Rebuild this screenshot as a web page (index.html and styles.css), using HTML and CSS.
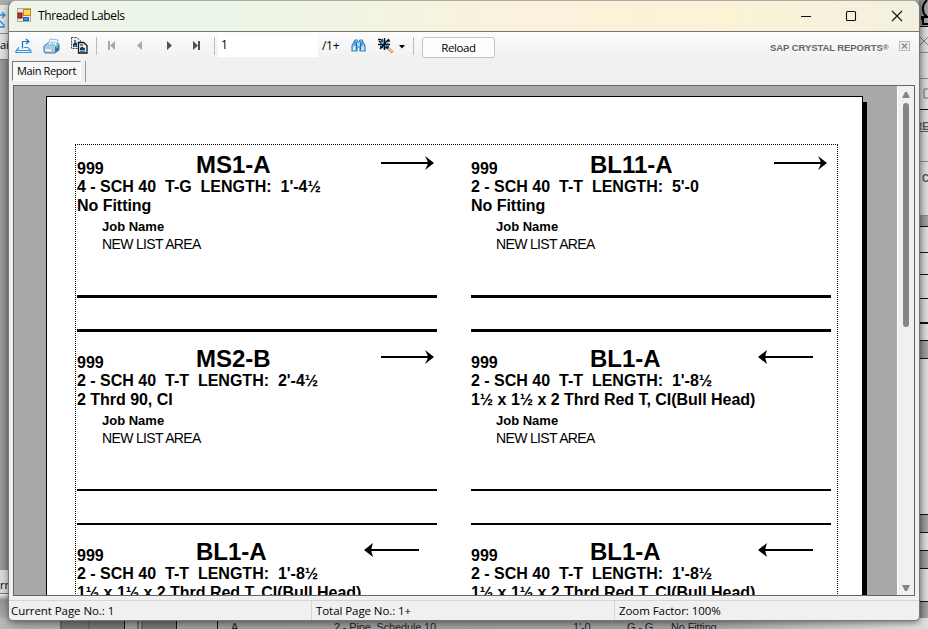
FILE: index.html
```html
<!DOCTYPE html>
<html lang="en">
<head>
<meta charset="utf-8">
<title>Threaded Labels</title>
<link rel="stylesheet" href="styles.css">
</head>
<body>
<div class="desktop">
  <div class="behind-left">
    <div class="bl-top"><svg width="9" height="16" viewBox="0 0 9 16"><path d="M0 3h4M2 0l3 3-3 3M0 9l4 4v2H0" fill="none" stroke="#268bd8" stroke-width="1.3"/></svg></div>
    <div class="bl-tab">ai</div>
    <div class="bl-canvas"></div>
    <div class="bl-status">rr</div>
  </div>
  <div class="behind-right">
    <div class="s dark" style="height:27px"><svg width="9" height="27" viewBox="0 0 9 27"><path d="M8 0q-5 5-4 10 1 6 4 6M2 17h7M4 17v7h5M3 17v3" fill="none" stroke="#000" stroke-width="2"/></svg></div>
    <div class="s soft" style="height:26px"><svg width="9" height="26" viewBox="0 0 9 26"><path d="M1 10l8 8M9 10l-8 8" fill="none" stroke="#777"/></svg></div>
    <div class="s soft" style="height:26px"></div>
    <div class="s" style="height:31px"><svg width="9" height="30" viewBox="0 0 9 30"><path d="M9 10H5v9h4" fill="none" stroke="#666"/></svg></div>
    <div class="s soft" style="height:52px"><span class="re">RE</span></div>
    <div class="s soft" style="height:54px"><span class="ce">C</span></div>
    <div class="s dark" style="height:11px"></div>
    <div class="s" style="height:26px"></div>
    <div class="s" style="height:22px"></div>
    <div class="s" style="height:24px"></div>
    <div class="s thick" style="height:25px"></div>
    <div class="s" style="height:17px"></div>
    <div class="s dark" style="height:18px"></div>
    <div class="s" style="height:156px"></div>
    <div class="s dark" style="height:18px"></div>
    <div class="s" style="height:18px"></div>
    <div class="s dark" style="height:18px"></div>
    <div class="s" style="height:33px"></div>
    <div class="s dark" style="height:18px"></div>
  </div>
  <div class="behind-bottom">
    <div class="cells"><i class="c0"></i><i class="c1"></i><i class="c2"></i><i class="c3"></i><i class="c4"></i><i class="c5"></i><i class="c6"></i></div>
    <span class="b b1">A</span><span class="b b2">2 - Pipe, Schedule 10</span><span class="b b3">1'-0</span><span class="b b4">G - G</span><span class="b b5">No Fitting</span>
  </div>

  <div class="window">
    <div class="titlebar">
      <svg class="app-icon" width="15" height="15" viewBox="0 0 15 15">
        <rect x=".5" y=".5" width="13" height="13" fill="#e8e8e8" stroke="#aaa"/>
        <rect x="1" y="5" width="4" height="5" fill="#c22c22" stroke="#8d1010"/><rect x="6.5" y="1.5" width="7" height="6" fill="#ffd650" stroke="#b98a16"/><rect x="6.500" y="9.500" width="5" height="3" fill="#4d8be8" stroke="#2a62bb"/>
      </svg>
      <span class="title">Threaded Labels</span>
      <svg class="controls" width="110" height="20" viewBox="0 0 110 20" fill="none" stroke="#111" stroke-width="1.1">
        <path d="M3 10.500h10"/><rect x="48.500" y="5.500" width="9" height="9" rx="1"/><path d="M94 5l10 10M104 5L94 15"/>
      </svg>
    </div>

    <div class="toolbar">
      <svg class="ico export" width="17" height="16" viewBox="0 0 17 16"><path d="M4 9.500L1 13v1.500h15V13l-3-3.500H9M1 12.500h15" fill="none" stroke="#2c9be8" stroke-width="1.200"/><path d="M7.500 10.500v-7H14M11 1l3 2.500L11 6" fill="none" stroke="#1875c8" stroke-width="1.200"/></svg>
      <svg class="ico print" width="17" height="16" viewBox="0 0 17 16"><path d="M1 8l4-3h10l1 2v5l-4 3H2l-1-2z" fill="#a8cdec" stroke="#3976ac"/><path d="M5 7l2-6 8 1-2 6z" fill="#f7fcff" stroke="#89bcd9"/><path d="M7.500 4l5 .4M7 6l5 .4" stroke="#7bb9dc"/><path d="M12 9l4-2v5l-4 3z" fill="#267bb7"/><path d="M2 12l7 .5" stroke="#fff" stroke-width="1.500"/><rect x="13" y="8" width="2" height="2" fill="#36ca82"/><path d="M8 13l4-1" stroke="#edae76" stroke-width="1.500"/></svg>
      <svg class="ico copy" width="17" height="17" viewBox="0 0 17 17"><path d="M.5.500h5l4 3v8h-9z" fill="#e6eef5" stroke="#444" stroke-dasharray="2 1"/><path d="M2 7l2-2 2 1v4H2z" fill="#16394c"/><path d="M3 4h2" stroke="#111"/><path d="M3 9h2" stroke="#398fd0" stroke-width="2"/><path d="M7.500 5.500h5l3.500 3v7.500H7.500z" fill="#e6f5ff" stroke="#111" stroke-width="1.300"/><path d="M9 11l2-1.500 3 2V15H9z" fill="#16394c"/><path d="M9 13h5v1.500H9z" fill="#69b7ed"/><path d="M9 8h3" stroke="#111"/></svg>
      <i class="sep s1"></i>
      <svg class="nav" width="108" height="16" viewBox="0 0 108 16"><g fill="#a9a9a9"><rect x="8" y="3" width="2" height="9"/><path d="M15 3v9l-5-4.500zM42 3v9l-5-4.500z"/></g><g fill="#505050"><path d="M67 3v9l5-4.500zM93 3v9l5-4.500z"/><rect x="98" y="3" width="2" height="9"/></g></svg>
      <i class="sep s2"></i>
      <span class="page-input">1</span>
      <span class="page-total">/1+</span>
      <svg class="ico find" width="15" height="15" viewBox="0 0 15 15"><path d="M1 13V8l3-6h2l1 2h1l1-2h2l3 6v5h-5V9H6v4z" fill="#a8d8f5" stroke="#2c86cc" stroke-width="1.200"/><path d="M4 3v5M5.500 4v8M9.500 4v8M11 3v5" stroke="#1871c1"/><path d="M3 9v3M12 9v3" stroke="#e7f0d6" stroke-width="1.500"/></svg>
      <svg class="ico zoomi" width="17" height="16" viewBox="0 0 17 16"><circle cx="6.500" cy="6.500" r="4.500" fill="#7cc9f4"/><path d="M0 1.500h3M1 3l9 8M11 1L2 11M6.500 0v12M0 6.500h12M4 1v3M9 3h3M2 9h3M8 9h3" fill="none" stroke="#071620" stroke-width="1.500"/><path d="M3 5h2M8 5h1M7 8h1" stroke="#66caff" stroke-width="1.300"/><path d="M10.500 10.500l4 4" stroke="#d39b61" stroke-width="3"/><path d="M10.500 10.500l3.500 3" stroke="#ffe2b1"/></svg>
      <svg class="caret" width="6" height="4" viewBox="0 0 6 4"><path d="M0 0h6L3 3.500z" fill="#000"/></svg>
      <i class="sep s3"></i>
      <span class="reload">Reload</span>
      <span class="brand">SAP CRYSTAL REPORTS<b>®</b></span>
      <svg class="close-tab" width="11" height="10" viewBox="0 0 11 10"><rect x=".5" y=".5" width="10" height="9" fill="#eee" stroke="#bbb"/><path d="M3 2.500l5 5M8 2.500l-5 5" stroke="#888" stroke-width="1.200"/></svg>
    </div>

    <div class="tabs"><span class="tab">Main Report</span><i></i></div>

    <div class="viewer">
      <div class="canvas">
        <div class="paper">
          <div class="labels">
            <article class="label"><header><span class="qty">999</span><h2>MS1-A</h2><svg class="arrow r" width="56" height="16"><path d="M0 7h49v2H0zM44 1l9 7-9 7 2.500-5V6z"/></svg></header><p class="spec">4 - SCH 40&nbsp; T-G&nbsp; LENGTH:&nbsp; 1'-4½</p><p class="fit">No Fitting</p><p class="job">Job Name</p><p class="area">NEW LIST AREA</p><hr><hr></article>
            <article class="label"><header><span class="qty">999</span><h2>BL11-A</h2><svg class="arrow r second" width="56" height="16"><path d="M0 7h49v2H0zM44 1l9 7-9 7 2.500-5V6z"/></svg></header><p class="spec">2 - SCH 40&nbsp; T-T&nbsp; LENGTH:&nbsp; 5'-0</p><p class="fit">No Fitting</p><p class="job">Job Name</p><p class="area">NEW LIST AREA</p><hr><hr></article>
            <article class="label thin"><header><span class="qty">999</span><h2>MS2-B</h2><svg class="arrow r" width="56" height="16"><path d="M0 7h49v2H0zM44 1l9 7-9 7 2.500-5V6z"/></svg></header><p class="spec">2 - SCH 40&nbsp; T-T&nbsp; LENGTH:&nbsp; 2'-4½</p><p class="fit">2 Thrd 90, CI</p><p class="job">Job Name</p><p class="area">NEW LIST AREA</p><hr><hr></article>
            <article class="label thin"><header><span class="qty">999</span><h2>BL1-A</h2><svg class="arrow" width="56" height="16"><path d="M7 7h48v2H7z"/><path d="M9 1L0 8l9 7-1.500-5V6z"/></svg></header><p class="spec">2 - SCH 40&nbsp; T-T&nbsp; LENGTH:&nbsp; 1'-8½</p><p class="fit">1½ x 1½ x 2 Thrd Red T, CI(Bull Head)</p><p class="job">Job Name</p><p class="area">NEW LIST AREA</p><hr><hr></article>
            <article class="label"><header><span class="qty">999</span><h2>BL1-A</h2><svg class="arrow" width="56" height="16"><path d="M7 7h48v2H7z"/><path d="M9 1L0 8l9 7-1.500-5V6z"/></svg></header><p class="spec">2 - SCH 40&nbsp; T-T&nbsp; LENGTH:&nbsp; 1'-8½</p><p class="fit">1½ x 1½ x 2 Thrd Red T, CI(Bull Head)</p></article>
            <article class="label"><header><span class="qty">999</span><h2>BL1-A</h2><svg class="arrow" width="56" height="16"><path d="M7 7h48v2H7z"/><path d="M9 1L0 8l9 7-1.500-5V6z"/></svg></header><p class="spec">2 - SCH 40&nbsp; T-T&nbsp; LENGTH:&nbsp; 1'-8½</p><p class="fit">1½ x 1½ x 2 Thrd Red T, CI(Bull Head)</p></article>
          </div>
        </div>
        <div class="paper-shadow"></div>
      </div>
      <div class="scrollbar"><svg width="8" height="6"><path d="M0 6L3 0h2l3 6z"/></svg><i></i><svg class="down" width="8" height="6"><path d="M0 0h8L5 6H3z"/></svg></div>
    </div>

    <div class="status"><span class="st1">Current Page No.: 1</span><span class="st2">Total Page No.: 1+</span><span class="st3">Zoom Factor: 100%</span></div>
  </div>
</div>
</body>
</html>
```
FILE: styles.css
```css
* { box-sizing: border-box; }
body { margin: 0; font-family: "Liberation Sans", Arial, sans-serif; color: #000; }
h2, p, hr { margin: 0; }
svg { display: block; flex: none; }
.desktop { position: relative; width: 928px; height: 629px; overflow: hidden; background: #aaa; }

.behind-left { position: absolute; left: 0; top: 0; width: 10px; height: 629px; display: flex; flex-direction: column; background: linear-gradient(#eee 594px, #929292 600px, #b8b8b8); font: 11px "Open Sans", sans-serif; }
.bl-top { height: 34px; padding-top: 7px; border-top: 5px solid #aaa; border-bottom: 1px solid #888; background: #e2e2e2; }
.bl-tab { height: 26px; padding-top: 3px; border-bottom: 1px solid #777; background: #dedede; }
.bl-canvas { height: 510px; background: linear-gradient(90deg, #999, #858585); }
.bl-status { height: 24px; padding-top: 7px; background: #d8d8d8; border-bottom: 1px solid #777; }

.behind-right { position: absolute; right: 0; top: 0; width: 9px; height: 629px; display: flex; flex-direction: column; background: #d5d5d5; overflow: hidden; }
.s { flex: none; overflow: hidden; border-bottom: 1px solid #111; background: linear-gradient(90deg, #bcbcbc, #dedede); }
.s.soft { border-color: #888; }
.s.dark { background: linear-gradient(90deg, #7d7d7d, #a4a4a4); }
.s.thick { border-bottom-width: 2px; }
.re, .ce { display: block; font-weight: bold; font-size: 10px; color: #555; }
.re { margin: 11px 0 0 -4px; text-decoration: underline; }
.ce { margin: 11px 0 0 3px; }

.behind-bottom { position: absolute; left: 0; top: 618px; width: 928px; height: 11px; overflow: hidden; background: linear-gradient(90deg, #b8b8b8, #999 60px, #a2a2a2 700px, #dcdcdc 910px); }
.cells { display: flex; height: 11px; padding-left: 34px; }
.cells i { border-right: 2px solid #666; }
.c0 { width: 28px; background: #aaa; }
.c1 { width: 28px; background: #777; }
.c2 { width: 35px; background: #777; border-right-width: 1px !important; border-color: #111 !important; }
.c3 { width: 14px; }
.c4 { width: 4px; }
.c5 { width: 34px; background: #777; border-right-width: 1px !important; border-color: #111 !important; }
.c6 { width: 41px; border-right: 1px solid #111 !important; }
.b { position: absolute; top: 3px; font-size: 11px; line-height: 13px; letter-spacing: -.15px; white-space: nowrap; color: #222; }
.b1 { left: 231px; } .b2 { left: 334px; } .b3 { left: 573px; } .b4 { left: 627px; } .b5 { left: 671px; }

.window { position: absolute; left: 8px; top: 0; width: 912px; height: 621px; display: flex; flex-direction: column; border: 1px solid #777; border-top-color: #aaa; border-radius: 8px 8px 5px 5px; background: #f0f0f0; overflow: hidden; box-shadow: 0 2px 6px rgba(0,0,0,.45); }
.titlebar { height: 31px; flex: none; display: flex; align-items: center; padding: 0 11px 1px 8px; border-bottom: 1px solid #777; background: linear-gradient(90deg, #eff5e6, #eaf6e8 200px, #faf2dc 500px, #faf3d6 720px, #f3f0df); }
.title { margin-left: 6px; padding-top: 1px; font: 12px/20px "Open Sans", sans-serif; letter-spacing: -.4px; }
.controls { margin-left: auto; }

.toolbar { height: 29px; flex: none; display: flex; align-items: center; padding: 0 0 2px 6px; background: linear-gradient(#fcfcfc, #f0f0f0); font: 12px "Open Sans", sans-serif; }
.print { margin-left: 11px; }
.copy { margin-left: 11px; }
.sep { width: 1px; height: 18px; background: #bbb; flex: none; }
.s1 { margin-left: 8px; }
.nav { margin-left: 3px; }
.s2 { margin-left: 6px; }
.page-input { width: 100px; height: 23px; margin-left: 3px; padding-left: 3px; background: #fff; line-height: 21px; flex: none; }
.page-total { width: 24px; margin-left: 4px; letter-spacing: -.3px; flex: none; }
.find { margin-left: 5px; }
.zoomi { margin-left: 12px; }
.caret { margin-left: 4px; margin-top: 3px; }
.s3 { margin-left: 8px; }
.reload { width: 73px; height: 21px; margin: 3px 0 0 8px; border: 1px solid #c4c4c4; border-radius: 3px; background: #fdfdfd; text-align: center; line-height: 19px; font-size: 11.500px; letter-spacing: -.4px; flex: none; }
.brand { width: 120px; margin: 3px 0 0 275px; font: bold 9.500px "Liberation Sans", sans-serif; letter-spacing: -.08px; color: #666; white-space: nowrap; flex: none; }
.brand b { font-size: 8px; vertical-align: 1px; }
.close-tab { margin-left: 9px; }

.tabs { height: 24px; flex: none; display: flex; padding-left: 3px; }
.tab { width: 69px; height: 20px; padding-left: 4px; border: 1px solid #777; border-right-color: #fff; border-bottom-color: #fff; background: #f8f8f8; font: 11px/17px "Open Sans", sans-serif; letter-spacing: -.38px; white-space: nowrap; }
.tabs i { width: 1px; height: 21px; margin-left: 4px; background: #999; }

.viewer { width: 902px; height: 511px; margin-left: 4px; flex: none; display: flex; border: 1px solid #666; }
.canvas { width: 883px; padding: 10px 0 0 32px; display: flex; background: #a9a9a9; overflow: hidden; }
.paper { width: 817px; height: 510px; flex: none; padding: 47px 0 0 28px; border: 1px solid #000; background: #fff; }
.paper-shadow { width: 4px; margin-top: 6px; background: #000; }
.labels { width: 763px; height: 600px; padding-left: 1px; display: grid; grid-template-columns: 394px 360px; grid-template-rows: 194px 193px 194px; border: 1px dotted #000; }
.label { width: 360px; font-weight: bold; white-space: nowrap; }
.label header { display: flex; height: 32px; }
.qty { width: 119px; padding-top: 15px; font-size: 16px; line-height: 18px; }
.label h2 { width: 168px; padding-top: 6px; font-size: 24px; line-height: 27px; }
.arrow { margin-top: 10px; }
.arrow.r { margin-left: 17px; }
.arrow.second { margin-left: 16px; }
.spec, .fit { height: 19px; font-size: 16px; line-height: 19px; }
.fit { height: 22px; letter-spacing: -.03px; }
.job { padding-left: 25px; height: 17px; font-size: 13px; line-height: 18px; }
.area { padding-left: 25px; height: 18px; margin-bottom: 42px; font-size: 14px; line-height: 18px; font-weight: normal; letter-spacing: -.65px; }
.label hr { height: 3px; border: 0; background: #000; }
.label hr + hr { margin-top: 31px; }
.label.thin hr { height: 2px; }
.label.thin hr + hr { margin-top: 32px; }

.scrollbar { width: 17px; padding: 6px 0 4px; border-left: 1px solid #fff; display: flex; flex-direction: column; align-items: center; fill: #858585; background: #f0f0f0; }
.scrollbar i { width: 6px; height: 224px; margin-top: 5px; border-radius: 3px; background: #858585; }
.down { margin-top: auto; }
.status { height: 20px; flex: none; margin-top: 4px; display: flex; border-top: 1px solid #d5d5d5; font: 11.500px/20px "Open Sans", sans-serif; letter-spacing: -.07px; }
.status span { white-space: nowrap; }
.st1 { width: 302px; padding-left: 2px; }
.st2 { width: 303px; padding-left: 4px; border-left: 1px solid #d5d5d5; }
.st3 { padding-left: 4px; border-left: 1px solid #d5d5d5; }
```
